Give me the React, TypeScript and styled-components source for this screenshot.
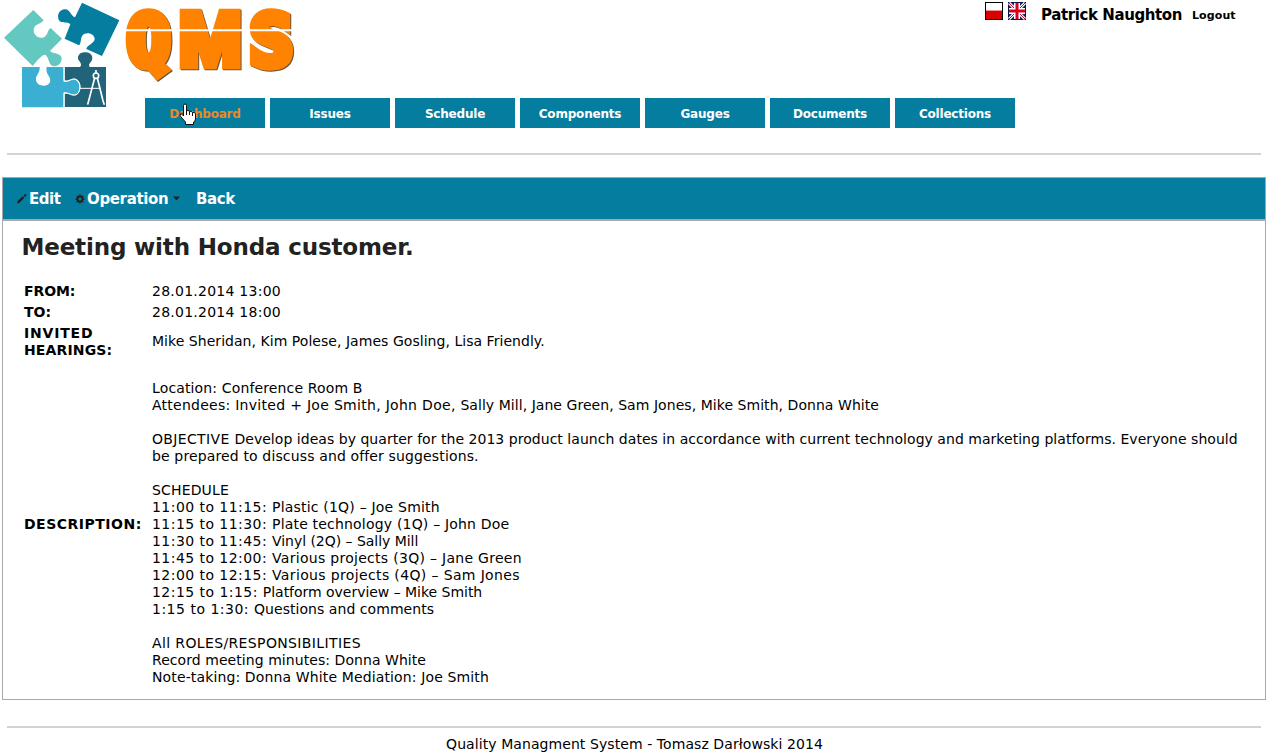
import React from "react";
import styled, { createGlobalStyle } from "styled-components";

const Global = createGlobalStyle`
  * { box-sizing: border-box; }
  body { margin: 0; background: #fff; color: #000; font: 14px/17px "DejaVu Sans", sans-serif; overflow: hidden; }
`;

const Page = styled.div`
  height: 754px;
  display: flex;
  flex-direction: column;
`;
const Header = styled.header`
  height: 153px;
  display: flex;
  align-items: flex-start;
`;
const Brand = styled.div`
  width: 145px;
  flex: none;
  height: 128px;
`;
const LogoSvg = styled.svg`
  display: block;
  overflow: visible;
`;
const Wordmark = styled.g`
  font-weight: 900;
  fill: #ff8200;
  stroke: #ff8200;
  stroke-linejoin: miter;
  filter: drop-shadow(3px 3px 0 #6b5440);
`;
const RoundLetter = styled.text`
  font-family: "DejaVu Sans Mono", monospace;
  font-size: 208px;
  stroke-width: 28px;
`;
const WideLetter = styled.text`
  font-family: Roboto, sans-serif;
  font-size: 226px;
  stroke-width: 20px;
`;
const Middle = styled.div`
  flex: 1;
  padding-top: 98px;
`;
const Nav = styled.nav`
  display: flex;
  gap: 5px;
`;
const NavItem = styled.a<{ $active?: boolean }>`
  position: relative;
  width: 120px;
  height: 30px;
  flex: none;
  background: #057d9f;
  color: ${(p) => (p.$active ? "#e78a2c" : "#fff")};
  font-size: 12px;
  font-weight: bold;
  line-height: 32px;
  text-align: center;
`;
const Ls = styled.span<{ $s?: number }>`
  display: inline-block;
  white-space: pre;
  letter-spacing: ${(p) => p.$s ?? 0}px;
`;
const Cursor = styled.svg`
  position: absolute;
  left: 34px;
  top: 5px;
`;
const User = styled.div`
  position: relative;
  width: 283px;
  margin-left: -283px;
  height: 30px;
  display: flex;
  padding-top: 2px;
`;
const Flag = styled.svg`
  flex: none;
  margin-right: 5px;
`;
const UserName = styled.strong`
  width: 151px;
  padding-left: 10px;
  font-size: 15px;
  line-height: 26px;
  white-space: nowrap;
  flex: none;
`;
const Logout = styled.strong`
  padding-left: 10px;
  font-size: 11px;
  line-height: 28px;
`;
const Rule = styled.div`
  height: 2px;
  flex: none;
  margin: 0 7px;
  background: #d3d3d3;
`;
const Panel = styled.main`
  height: 523px;
  flex: none;
  margin: 22px 2px 26px;
  border: 1px solid #a9a9a9;
`;
const Toolbar = styled.div`
  height: 43px;
  background: #057d9f;
  border-bottom: 2px solid #a9a9a9;
  display: flex;
  align-items: center;
  color: #fff;
  font-size: 15px;
  font-weight: bold;
  padding: 2px 0 0 13px;
`;
const Tool = styled.div<{ $w: number }>`
  width: ${(p) => p.$w}px;
  display: flex;
  align-items: center;
  flex: none;
  svg { flex: none; margin-top: -1px; }
`;
const Title = styled.h1`
  margin: 0;
  padding: 12px 0 0 18.5px;
  font-size: 23px;
  line-height: 28px;
  color: #222;
`;
const Details = styled.div`
  display: grid;
  grid-template-columns: 118px 1fr;
  column-gap: 10px;
  row-gap: 4px;
  align-items: center;
  padding: 22px 0 0 21px;
`;
const Label = styled.strong`
  white-space: nowrap;
`;
const Line = styled.div<{ $raised?: boolean }>`
  height: 17px;
  white-space: nowrap;
  ${(p) => p.$raised && "margin-bottom: 2px;"}
`;
const Footer = styled.footer`
  padding: 8px 0 0 1px;
  text-align: center;
`;

const navItems = ["Dashboard", "Issues", "Schedule", "Components", "Gauges", "Documents", "Collections"];

type Run = [text: string, spacing: number];

const description: Run[][] = [
  [],
  [["Location: Conference Room B", 0.14]],
  [["Attendees: ", 0.25], ["Invited + Joe Smith, John Doe, ", 0.3], ["Sally Mill, Jane Green, Sam Jones, Mike Smith, Donna White", 0.05]],
  [],
  [["OBJECTIVE ", 0.35], ["Develop ideas by quarter for the 2013 product launch dates in accordance with current technology and marketing platforms. Everyone should", 0.035]],
  [["be prepared to discuss and offer suggestions.", 0.14]],
  [],
  [["SCHEDULE", 0.15]],
  [["11:00 to 11:15: ", 0.45], ["Plastic (1Q) – Joe Smith", 0.2]],
  [["11:15 to 11:30: ", 0.45], ["Plate technology (1Q) – John Doe", 0.19]],
  [["11:30 to 11:45: ", 0.45], ["Vinyl (2Q) – Sally Mill", -0.04]],
  [["11:45 to 12:00: ", 0.45], ["Various projects (3Q) – Jane Green", 0.29]],
  [["12:00 to 12:15: ", 0.45], ["Various projects (4Q) – Sam Jones", 0.36]],
  [["12:15 to 1:15: ", 0.46], ["Platform overview – Mike Smith", -0.03]],
  [["1:15 to 1:30: ", 0.5], ["Questions and comments", 0.05]],
  [],
  [["All ROLES/RESPONSIBILITIES", 0.37]],
  [["Record meeting minutes: Donna White", 0.06]],
  [["Note-taking: Donna White Mediation: Joe Smith", 0.13]],
];

const Logo = () => (
  <LogoSvg width="300" height="110" viewBox="0 0 900 330">
    <path fill="#63c8c0" d="M100 30L131 61C126 71 107 71 102 84C97 101 111 115 127 113C144 111 142 89 152 84L186 116L150 153C156 161 178 158 184 171C188 187 174 202 158 198C146 194 147 174 137 165C127 161 108 187 98 198L12 113Z" />
    <path fill="#057d9f" d="M246 8L358 61L306 168L259 147C260 137 282 131 284 118C285 103 266 95 252 102C239 110 246 128 237 136L194 116L211 73C202 62 185 74 176 59C170 43 180 27 196 28C211 29 211 47 225 52Z" />
    <path fill="#3bafd1" d="M66 201H119C121 219 106 226 108 240C110 253 122 258 134 257C148 255 154 244 149 233C144 223 137 217 140 201H191V245C207 248 213 235 226 239C242 246 243 275 228 283C214 288 207 275 191 277V322H66Z" />
    <path fill="#216479" d="M194 201H240C251 189 231 183 234 170C237 160 246 156 258 157C272 158 280 168 276 179C273 188 264 190 269 201H318V321H194V281C208 278 216 290 230 284C245 276 245 246 229 238C215 232 208 245 194 242Z" />
    <path fill="none" stroke="#fff" strokeWidth="3" d="M192 201V242C208 247 214 233 228 238C244 245 244 276 229 284C214 290 207 276 192 280V321M240 265H302" />
    <path fill="none" stroke="#fff" strokeWidth="5" d="M288 210V219M284 234L266 302L263 314M292 234L309 302L313 314" />
    <circle cx="288" cy="227" r="8" fill="#216479" stroke="#fff" strokeWidth="5" />
    <Wordmark>
      <RoundLetter x="382" y="195" textLength="128" lengthAdjust="spacingAndGlyphs">Q</RoundLetter>
      <WideLetter x="537" y="199" textLength="187" lengthAdjust="spacingAndGlyphs">M</WideLetter>
      <RoundLetter x="750" y="195" textLength="128" lengthAdjust="spacingAndGlyphs">S</RoundLetter>
    </Wordmark>
    <path stroke="#fff" strokeWidth="6" d="M370 91H895" />
  </LogoSvg>
);

export default function App() {
  return (
    <Page>
      <Global />
      <Header>
        <Brand><Logo /></Brand>
        <Middle>
          <Nav>
            {navItems.map((t, i) => (
              <NavItem key={t} $active={i === 0}>
                <Ls $s={-0.2}>{t}</Ls>
                {i === 0 && (
                  <Cursor width="18" height="23" viewBox="0 0 18 23">
                    <path fill="#fff" stroke="#111" d="M4.5 13V2.5Q4.5 1 6 1T7.500 2.500V8Q9 6.500 10.500 8.500Q12 7.500 13.500 9.500Q16 8.500 16.500 11V16Q16.500 18 14.500 19V21.500H6.500V19L2 14Q.500 12 1.500 11T4.500 13ZM7.500 8V12M10.500 8.500V12M13.500 9.500V13" />
                  </Cursor>
                )}
              </NavItem>
            ))}
          </Nav>
        </Middle>
        <User>
          <Flag width="18" height="18" viewBox="0 0 18 18">
            <rect width="18" height="18" fill="#000" />
            <rect x="1" y="1" width="16" height="8" fill="#fff" />
            <rect x="1" y="8" width="16" height="9" fill="#d90000" />
            <rect x="1" y="8" width="16" height="1" fill="#ee9090" />
          </Flag>
          <Flag width="18" height="18" viewBox="0 0 18 18">
            <rect width="18" height="18" fill="#0b1540" />
            <rect x="1" y="1" width="16" height="16" fill="#15206a" />
            <path d="M1 1L17 17M17 1L1 17" stroke="#fff" strokeWidth="3" />
            <path d="M1 1L17 17M17 1L1 17" stroke="#d8001c" strokeWidth="1" />
            <path d="M9 1V17M1 9H17" stroke="#fff" strokeWidth="6" />
            <path d="M9 1V17M1 9H17" stroke="#d8001c" strokeWidth="3" />
          </Flag>
          <UserName><Ls $s={-0.4}>Patrick Naughton</Ls></UserName>
          <Logout><Ls $s={0.1}>Logout</Ls></Logout>
        </User>
      </Header>
      <Rule />
      <Panel>
        <Toolbar>
          <Tool $w={59}>
            <svg width="13" height="12" viewBox="0 0 13 12">
              <path fill="#222" d="M1 10.500L1.800 7.800L6.800 3.200L8.400 4.800L3.600 9.700ZM7.600 2.400L8.800 1.200Q9.500.700 10.100 1.300Q10.800 2 10.300 2.800L9.100 4Z" />
            </svg>
            <Ls $s={-0.5}>Edit</Ls>
          </Tool>
          <Tool $w={121}>
            <svg width="12" height="12" viewBox="0 0 12 12">
              <circle cx="5" cy="6" r="2.500" fill="none" stroke="#222" strokeWidth="2" />
              <path stroke="#222" strokeWidth="1.600" d="M5 1.500V3M5 9V10.500M.500 6H2M8 6H9.500M1.800 2.800L3 4M7 8L8.200 9.200M8.200 2.800L7 4M3 8L1.800 9.200" />
            </svg>
            <Ls $s={-0.35}>Operation</Ls>
            <svg width="13" height="6" viewBox="0 0 13 6">
              <path fill="#222" d="M5 .500H12L8.500 4.500Z" />
            </svg>
          </Tool>
          <Ls $s={-0.4}>Back</Ls>
        </Toolbar>
        <Title><Ls $s={-0.16}>Meeting with Honda customer.</Ls></Title>
        <Details>
          <Label><Ls $s={-0.1}>FROM:</Ls></Label><Line><Ls $s={0.25}>28.01.2014 13:00</Ls></Line>
          <Label><Ls>TO:</Ls></Label><Line><Ls $s={0.25}>28.01.2014 18:00</Ls></Line>
          <Label><Ls $s={0.8}>INVITED</Ls><br /><Ls $s={0.15}>HEARINGS:</Ls></Label>
          <Line $raised><Ls $s={0.04}>Mike Sheridan, Kim Polese, James Gosling, Lisa Friendly.</Ls></Line>
          <Label><Ls $s={0.5}>DESCRIPTION:</Ls></Label>
          <div>
            {description.map((runs, i) => (
              <Line key={i}>{runs.map(([t, s]) => <Ls key={t} $s={s}>{t}</Ls>)}</Line>
            ))}
          </div>
        </Details>
      </Panel>
      <Rule />
      <Footer><Ls $s={0.075}>Quality Managment System - Tomasz Darłowski 2014</Ls></Footer>
    </Page>
  );
}
